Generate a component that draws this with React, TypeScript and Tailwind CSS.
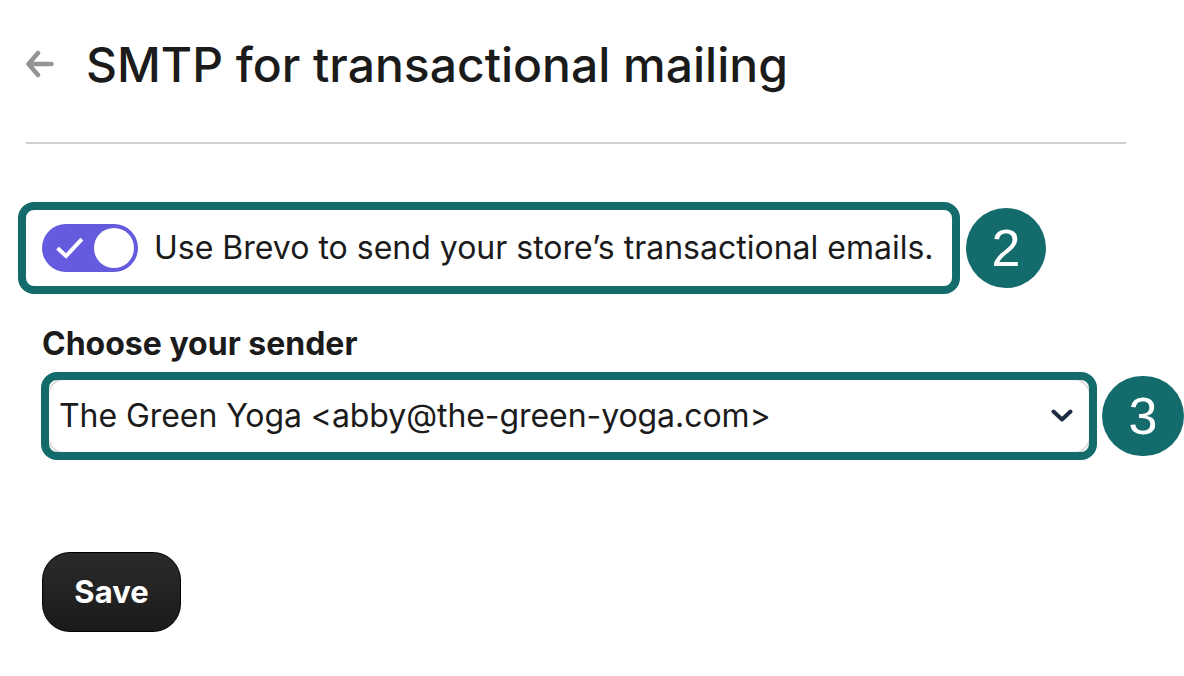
import React from "react";

function Badge({ n, wide }: { n: string; wide?: boolean }) {
  return (
    <div className={(wide ? "w-[82px] " : "w-[80px] ") + "flex h-[80px] shrink-0 items-center justify-center rounded-full bg-[#136c6b] font-['Liberation_Sans',sans-serif] text-[52px] leading-none text-white"}>
      {n}
    </div>
  );
}

export default function App() {
  return (
    <div className="h-[676px] w-[1184px] overflow-hidden bg-white font-['Inter',sans-serif] text-[#1b1b1b]">
      <div className="ml-[26px] flex h-[144px] w-[1100px] items-start border-b-2 border-[#cfcfcf] pt-[33px]">
        <svg width="28" height="28" viewBox="0 0 28 28" fill="none" className="mt-[17px] shrink-0">
          <path d="M25.500 14H3M12 3 2.500 14 12 25" stroke="#949494" strokeWidth="4.500" strokeLinecap="round" strokeLinejoin="round" />
        </svg>
        <h1 className="ml-[32px] text-[48px] leading-[64px] font-[450] tracking-[0px] whitespace-nowrap">
          SMTP for transactional mailing
        </h1>
      </div>

      <div className="mt-[58px] ml-[18px] flex items-center gap-[6px]">
        <div className="flex h-[92px] w-[942px] items-center rounded-[16px] border-[8px] border-[#136c6b] pl-[16px]">
          <div className="flex h-[48px] w-[96px] items-center justify-between rounded-full bg-[#655bde] pr-[4px] pl-[14px]">
            <svg width="28" height="24" viewBox="0 0 28 24" fill="none">
              <path d="M3 13.500 10 20 24.500 4.500" stroke="#fff" strokeWidth="4" strokeLinecap="square" />
            </svg>
            <div className="h-[40px] w-[40px] rounded-full bg-white" />
          </div>
          <span className="ml-[16px] text-[32px] leading-none whitespace-nowrap">
            Use Brevo to send your store’s transactional emails.
          </span>
        </div>
        <Badge n="2" />
      </div>

      <div className="mt-[31px] ml-[42px] text-[32px] leading-[38px] font-bold">Choose your sender</div>

      <div className="mt-[9px] ml-[41px] flex items-center gap-[5px]">
        <div className="relative h-[88px] w-[1056px] shrink-0">
          <div className="m-[6px] flex h-[76px] items-center justify-between rounded-[18px] border-2 border-[#dddddd] pr-[16px] pl-[10px]">
            <span className="text-[32px] leading-none tracking-[-0.07px] whitespace-nowrap">
              The Green Yoga &lt;abby@the-green-yoga.com&gt;
            </span>
            <svg width="22" height="14" viewBox="0 0 22 14" fill="none">
              <path d="M2.500 2.500 11 10.500 19.500 2.500" stroke="#1f2a44" strokeWidth="4" strokeLinecap="round" strokeLinejoin="round" />
            </svg>
          </div>
          <div className="absolute inset-0 rounded-[16px] border-[8px] border-[#136c6b]" />
        </div>
        <Badge n="3" wide />
      </div>

      <button className="mt-[92px] ml-[42px] flex h-[80px] w-[139px] items-center justify-center rounded-[28px] border border-black bg-[linear-gradient(#2b2b2b,#1a1a1a)] text-[31px] font-bold text-white">
        Save
      </button>
    </div>
  );
}
